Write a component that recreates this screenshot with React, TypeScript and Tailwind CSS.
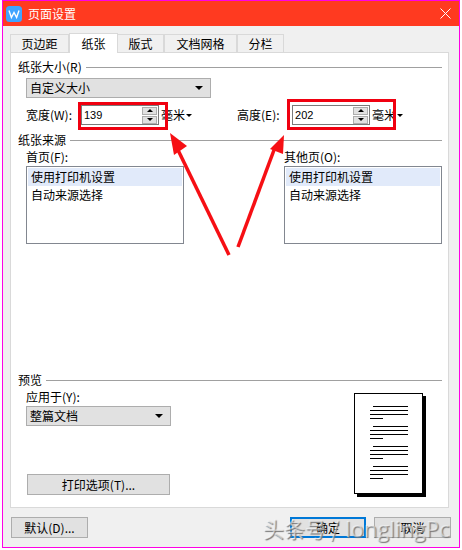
const FONT = "font-['Noto_Sans_CJK_SC','Liberation_Sans',sans-serif]";

const PageLines = () => (
  <div className="flex flex-col gap-[7px]">
    {[0, 1, 2, 3].map((i) => (
      <div key={i} className="flex flex-col gap-[3px]">
        <div className="ml-[3px] h-px w-[35px] bg-black" />
        <div className="h-px w-[38px] bg-black" />
        <div className="h-px w-[38px] bg-black" />
        <div className="h-px w-[13px] bg-black" />
      </div>
    ))}
  </div>
);

const SectionTitle = ({ title }: { title: string }) => (
  <div className="flex h-[14px] items-center gap-[4px]">
    <span className="text-[12px] leading-[14px] text-black">{title}</span>
    <div className="h-px flex-1 bg-[#a0a0a0]" />
  </div>
);

const Caret = () => (
  <div className="h-0 w-0 border-x-[3px] border-t-[3px] border-x-transparent border-t-black" />
);

const Select = ({ value, width }: { value: string; width: string }) => (
  <div
    className={`flex h-[20px] items-center justify-between border border-[#adadad] bg-[#e1e1e1] pl-[3px] pr-[7px] text-[12px] leading-[18px] text-black ${width}`}
  >
    <span>{value}</span>
    <div className="h-0 w-0 border-x-[4px] border-t-[4px] border-x-transparent border-t-black" />
  </div>
);

const Spinner = ({ value }: { value: string }) => (
  <div className="flex h-[20px] items-center">
    <div className="flex h-[20px] w-[78px] items-center justify-between border border-[#7a7a7a] bg-white pl-[2px] pr-[1px]">
      <span className="font-['Liberation_Sans',sans-serif] text-[11px] leading-[16px] text-black">{value}</span>
      <div className="flex w-[15px] flex-col gap-px">
        <div className="flex h-[8px] items-center justify-center border border-[#adadad] bg-[#e1e1e1]">
          <div className="h-0 w-0 border-x-[3px] border-b-[3px] border-x-transparent border-b-black" />
        </div>
        <div className="flex h-[8px] items-center justify-center border border-[#adadad] bg-[#e1e1e1]">
          <div className="h-0 w-0 border-x-[3px] border-t-[3px] border-x-transparent border-t-black" />
        </div>
      </div>
    </div>
    <div className="ml-[2px] flex items-center gap-[1px] text-[12px] leading-[18px] text-black">
      <span>毫米</span>
      <Caret />
    </div>
  </div>
);

const ListBox = ({ label }: { label: string }) => (
  <div className="w-[158px]">
    <div className="h-[18px] text-[12px] leading-[18px] text-black">{label}</div>
    <div className="h-[78px] border border-[#828790] bg-white p-px text-[12px] leading-[18px] text-black">
      <div className="flex h-[18px] items-center bg-[#e1eafa] pl-[3px]">使用打印机设置</div>
      <div className="flex h-[18px] items-center pl-[3px]">自动来源选择</div>
    </div>
  </div>
);

const Tab = ({ label, width, active }: { label: string; width: string; active?: boolean }) => (
  <div
    className={`flex items-center justify-center border border-[#d9d9d9] text-[12px] leading-[16px] text-black ${width} ${
      active
        ? "relative z-10 -mb-px -mr-px -mt-[1px] h-[20px] border-b-0 bg-white"
        : "h-[18px] border-b-0 bg-[#f0f0f0]"
    }`}
  >
    {label}
  </div>
);

const Button = ({ label, className }: { label: string; className: string }) => (
  <div
    className={`flex h-[21px] items-center justify-center border border-[#adadad] bg-[#e1e1e1] text-[12px] leading-[18px] text-black ${className}`}
  >
    {label}
  </div>
);

export default function App() {
  return (
    <div className={`relative h-[550px] w-[462px] overflow-hidden bg-white ${FONT}`}>
      <div className="ml-[2px] flex h-[548px] w-[458px] flex-col border border-[#ff00e6] bg-[#f0f0f0]">
        {/* Title bar */}
        <div className="flex h-[25px] items-center justify-between bg-[#ff3a20] pl-[3px] pr-[8px]">
          <div className="flex items-center gap-[6px]">
            <svg width="16" height="16" viewBox="0 0 16 16">
              <rect width="16" height="16" rx="3.5" fill="#3fa4ff" />
              <path d="M3 4.5 L5.4 11.5 L8 6.5 L10.6 11.5 L13 4.5" fill="none" stroke="#fff" strokeWidth="1.4" />
            </svg>
            <span className="text-[12px] leading-[18px] text-white">页面设置</span>
          </div>
          <svg width="11" height="11" viewBox="0 0 11 11">
            <path d="M0.5 0.5 L10.5 10.5 M10.5 0.5 L0.5 10.5" stroke="#fff" strokeWidth="1" />
          </svg>
        </div>

        {/* Tabs */}
        <div className="ml-[7px] mt-[8px] flex items-end">
          <Tab label="页边距" width="w-[59px]" />
          <Tab label="纸张" width="w-[49px]" active />
          <Tab label="版式" width="w-[47px]" />
          <Tab label="文档网格" width="w-[73px]" />
          <Tab label="分栏" width="w-[47px]" />
        </div>

        {/* Panel */}
        <div className="ml-[7px] flex h-[456px] w-[439px] flex-col border border-[#d9d9d9] bg-white pl-[7px] pr-[6px] pt-[7px]">
          <SectionTitle title="纸张大小(R)" />
          <div className="ml-[8px] mt-[4px]">
            <Select value="自定义大小" width="w-[185px]" />
          </div>
          <div className="ml-[8px] mt-[7px] flex h-[20px] items-center">
            <div className="w-[55px] text-[12px] leading-[18px] text-black">宽度(W):</div>
            <Spinner value="139" />
            <div className="ml-[45px] w-[55px] text-[12px] leading-[18px] text-black">高度(E):</div>
            <Spinner value="202" />
          </div>

          <div className="mt-[8px]">
            <SectionTitle title="纸张来源" />
          </div>
          <div className="ml-[8px] mt-px flex justify-between">
            <ListBox label="首页(F):" />
            <ListBox label="其他页(O):" />
          </div>

          <div className="mt-[129px]">
            <SectionTitle title="预览" />
          </div>
          <div className="ml-[8px] mt-px flex items-start justify-between">
            <div className="flex flex-col">
              <div className="h-[18px] text-[12px] leading-[18px] text-black">应用于(Y):</div>
              <Select value="整篇文档" width="w-[145px]" />
              <Button label="打印选项(T)..." className="ml-px mt-[48px] w-[143px]" />
            </div>
            <div className="mr-[19px] mt-[5px] flex h-[101px] w-[69px] justify-center border border-black bg-white pt-[12px] shadow-[3px_3px_0_#000]">
              <PageLines />
            </div>
          </div>
        </div>

        {/* Footer */}
        <div className="mt-[9px] flex items-start pl-[8px] pr-[8px]">
          <Button label="默认(D)..." className="w-[77px]" />
          <div className="ml-auto flex gap-[8px]">
            <div className="flex h-[21px] w-[76px] items-center justify-center border-2 border-[#0078d7] bg-[#e1e1e1] text-[12px] leading-[18px] text-black">
              确定
            </div>
            <Button label="取消" className="w-[77px]" />
          </div>
        </div>
      </div>

      {/* Annotations */}
      <div className="absolute left-[78px] top-[102px] h-[28px] w-[90px] border-[3px] border-[#f00010]" />
      <div className="absolute left-[287px] top-[99px] h-[31px] w-[109px] border-[3px] border-[#f00010]" />
      <svg className="absolute left-0 top-0" width="462" height="550" viewBox="0 0 462 550">
        <path d="M229 255 L178 150" stroke="#f60f14" strokeWidth="3.5" fill="none" />
        <path d="M170 133 L187 146 L174 155 Z" fill="#f60f14" />
        <path d="M238 247 L274 150" stroke="#f60f14" strokeWidth="3.5" fill="none" />
        <path d="M284 135 L283 154 L270 149 Z" fill="#f60f14" />
      </svg>

      {/* Watermark */}
      <div className="absolute left-[263px] top-[513px] flex h-[30px] items-center whitespace-nowrap text-[21px] leading-[30px] text-white/50 [text-shadow:1px_1px_1px_#777]">
        <span>头条号 /</span>
        <span className="ml-[6px] font-['Open_Sans',sans-serif] text-[22px]">longlingPc</span>
      </div>
    </div>
  );
}
